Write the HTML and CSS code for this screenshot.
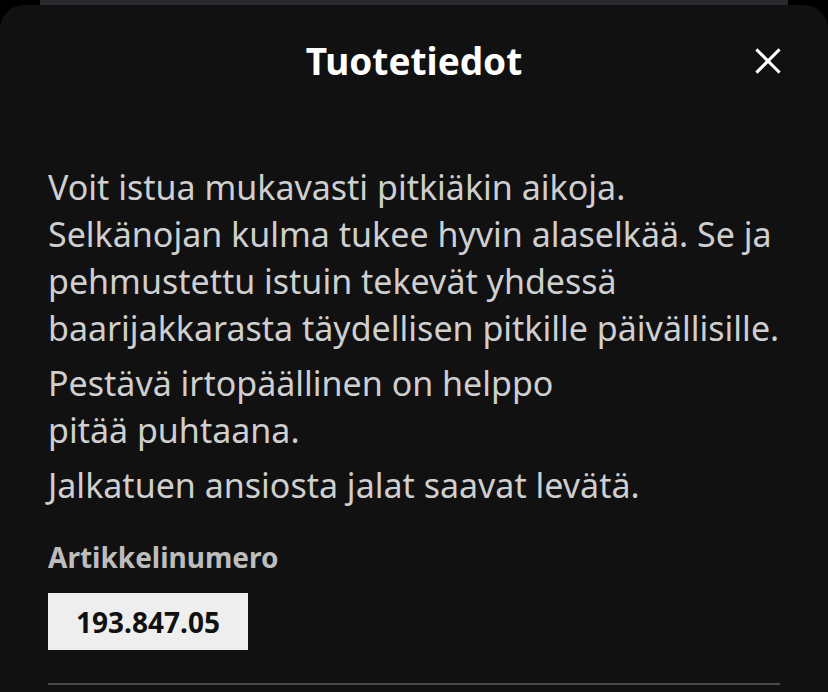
FILE: index.html
```html
<!DOCTYPE html>
<html lang="fi">
<head>
<meta charset="utf-8">
<link rel="stylesheet" href="styles.css">
</head>
<body>
<div class="backdrop"><div class="peek"></div></div>
<section class="sheet">
  <header class="sheet-header">
    <h1 class="sheet-title">Tuotetiedot</h1>
    <button class="close" aria-label="Sulje">
      <svg viewBox="0 0 24 24" width="28" height="28"><path d="M3 3 L21 21 M21 3 L3 21" stroke="#fff" stroke-width="2.6" stroke-linecap="square" fill="none"/></svg>
    </button>
  </header>
  <div class="sheet-body">
    <p class="desc">Voit istua mukavasti pitkiäkin aikoja. Selkänojan kulma tukee hyvin alaselkää. Se ja pehmustettu istuin tekevät yhdessä baarijakkarasta täydellisen pitkille päivällisille.</p>
    <p class="desc">Pestävä irtopäällinen on helppo<br>pitää puhtaana.</p>
    <p class="desc">Jalkatuen ansiosta jalat saavat levätä.</p>
    <h2 class="label">Artikkelinumero</h2>
    <div class="artno">193.847.05</div>
    <hr class="divider">
  </div>
</section>
</body>
</html>
```
FILE: styles.css
```css
* { box-sizing: border-box; }
html, body { margin: 0; padding: 0; background: #000; }
body {
  width: 828px;
  height: 692px;
  overflow: hidden;
  font-family: "Noto Sans", "Open Sans", sans-serif;
}
.backdrop { height: 5px; padding: 0 40px; }
.peek { height: 5px; background: #2b2b2f; }
.sheet {
  background: #111111;
  border-radius: 24px 24px 0 0;
  height: 687px;
  padding: 0 48px;
}
.sheet-header {
  position: relative;
  height: 112px;
  display: flex;
  align-items: center;
  justify-content: center;
}
.sheet-title {
  margin: 0;
  margin-top: -2px;
  color: #fff;
  font-size: 37px;
  font-weight: 700;
}
.close {
  position: absolute;
  right: -8px;
  top: 36px;
  background: none;
  border: 0;
  padding: 0;
  width: 40px;
  height: 40px;
  display: flex;
  align-items: center;
  justify-content: center;
}
.sheet-body { padding-top: 47px; }
.desc {
  margin: 0 0 8px;
  color: #cfcfcf;
  font-size: 34px;
  line-height: 47px;
}
.label {
  margin: 30px 0 0;
  color: #bdbdbd;
  font-size: 28px;
  font-weight: 700;
  line-height: 36px;
}
.artno {
  margin-top: 18px;
  width: 200px;
  height: 57px;
  background: #eeeeee;
  color: #111;
  font-size: 28px;
  font-weight: 700;
  display: flex;
  align-items: center;
  justify-content: center;
}
.divider {
  margin: 33px 0 0;
  border: 0;
  border-top: 2px solid #4a4a4a;
}
```
